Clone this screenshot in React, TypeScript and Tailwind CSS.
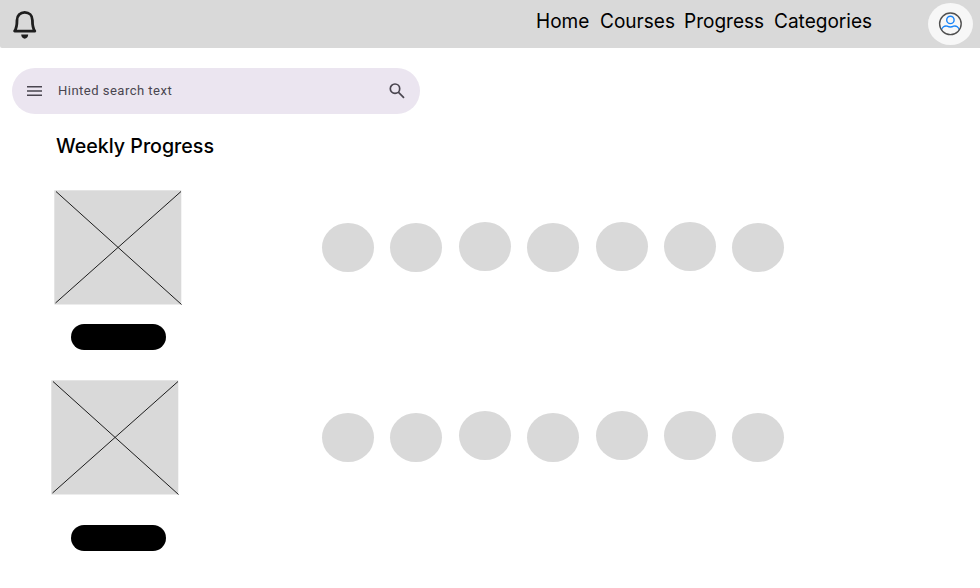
const navItems = [
  { label: 'Home', box: 'w-[64px]' },
  { label: 'Courses', box: 'w-[84.8px]' },
  { label: 'Progress', box: 'w-[90px]' },
  { label: 'Categories', box: 'w-[100px]' },
];

function BellIcon() {
  return (
    <svg className="ml-[11px] mt-[9px] h-[32px] w-[28px] shrink-0" viewBox="0 0 28 32" fill="none">
      <path
        d="M3.6 22.1 C5.4 19.5 6 17.5 6 11.2 C6 6.4 9.3 3.4 13.7 3.4 C18.1 3.4 21.4 6.4 21.4 11.2 C21.4 17.5 22 19.5 23.8 22.1 Z"
        stroke="#1e1e1e"
        strokeWidth="2.8"
        strokeLinejoin="round"
      />
      <path d="M10.2 25.5 H17.2 C17.2 31 10.2 31 10.2 25.5 Z" fill="#1e1e1e" />
    </svg>
  );
}

function Avatar() {
  return (
    <div className="ml-auto mr-[7px] mt-[2.5px] flex h-[42.5px] w-[45.5px] items-center justify-center rounded-[50%] bg-[#f7f7f7]">
      <svg className="h-[24px] w-[24px]" viewBox="0 0 24 24" fill="none" strokeWidth="1.4">
        <circle cx="12.4" cy="7.9" r="3.7" stroke="#1683f8" />
        <path d="M3.3 18.2 C4 15.4 6.6 13.2 9.2 14.2 C11.3 15.3 13.5 15.3 15.6 14.2 C18.2 13.2 20.8 15.4 21.5 18.2" stroke="#1683f8" />
        <circle cx="12.4" cy="11.8" r="10.8" stroke="#505050" />
      </svg>
    </div>
  );
}

function SearchBar() {
  return (
    <div className="ml-[11.5px] mt-[19.5px] flex h-[46px] w-[408.7px] items-center rounded-full bg-[#ebe5f0] text-[#49454f]">
      <svg className="ml-[15.5px] h-[12px] w-[15px]" viewBox="0 0 15 12" fill="none" stroke="currentColor" strokeWidth="1.5">
        <path d="M0 1.8H15M0 6H15M0 10.2H15" />
      </svg>
      <span className="ml-[16px] origin-left scale-x-[0.976] whitespace-nowrap font-['Roboto',sans-serif] text-[13.4px] leading-5 tracking-[0.47px]">
        Hinted search text
      </span>
      <svg className="ml-auto mr-[15.7px] h-[16px] w-[16px]" viewBox="0 0 16 16" fill="none" stroke="currentColor" strokeWidth="1.7">
        <circle cx="6" cy="5.7" r="4.7" />
        <path d="M9.3 9.1 L15 14.8" />
      </svg>
    </div>
  );
}

function Placeholder() {
  return (
    <svg className="h-[115px] w-[128px]" viewBox="0 0 128 115" fill="none" stroke="#1c1c1c" strokeWidth="1">
      <rect x="0.3" y="0.3" width="127" height="114.2" fill="#d9d9d9" stroke="none" />
      <path d="M2 1.5 L127.5 114.5 M1.5 113 L127 1.5" />
    </svg>
  );
}

function Days({ offsets }: { offsets: string[] }) {
  return (
    <div className="flex gap-[16.3px]">
      {offsets.map((offset, i) => (
        <div key={i} className={`h-[49px] w-[52.1px] rounded-[50%] bg-[#d9d9d9] ${offset}`} />
      ))}
    </div>
  );
}

export default function App() {
  return (
    <div className="h-[588px] w-[980px] overflow-hidden bg-white font-['Inter',sans-serif] text-black">
      <header className="flex h-[48px] items-start rounded-bl-[2px] bg-[#d9d9d9]">
        <BellIcon />
        <nav className="ml-[496.7px] flex pt-[8.7px] text-[20px] leading-6">
          {navItems.map((item) => (
            <a key={item.label} className={`${item.box} origin-left scale-x-[0.952] whitespace-nowrap`}>
              {item.label}
            </a>
          ))}
        </nav>
        <Avatar />
      </header>
      <SearchBar />
      <h1 className="ml-[56px] mt-[20px] origin-left scale-x-[0.981] text-[20px] font-[450] leading-6">
        Weekly Progress
      </h1>

      <section className="mt-[32.5px] flex">
        <div className="ml-[54px] w-[128px]">
          <Placeholder />
          <div className="ml-[16.6px] mt-[19.4px] h-[26px] w-[95.8px] rounded-full bg-black" />
        </div>
        <div className="ml-[140px] mt-[32px]">
          <Days offsets={['mt-[1.3px]', 'mt-[1.3px]', 'mt-0', 'mt-[1.3px]', 'mt-0', 'mt-0', 'mt-[1.3px]']} />
        </div>
      </section>

      <section className="mt-[29.6px] flex">
        <div className="ml-[50.7px] w-[128px]">
          <Placeholder />
          <div className="ml-[19.9px] mt-[29.8px] h-[26px] w-[95.8px] rounded-full bg-black" />
        </div>
        <div className="ml-[143.3px] mt-[31.4px]">
          <Days offsets={['mt-[1.2px]', 'mt-[1.2px]', 'mt-0', 'mt-[1.6px]', 'mt-0', 'mt-0', 'mt-[1.6px]']} />
        </div>
      </section>
    </div>
  );
}
